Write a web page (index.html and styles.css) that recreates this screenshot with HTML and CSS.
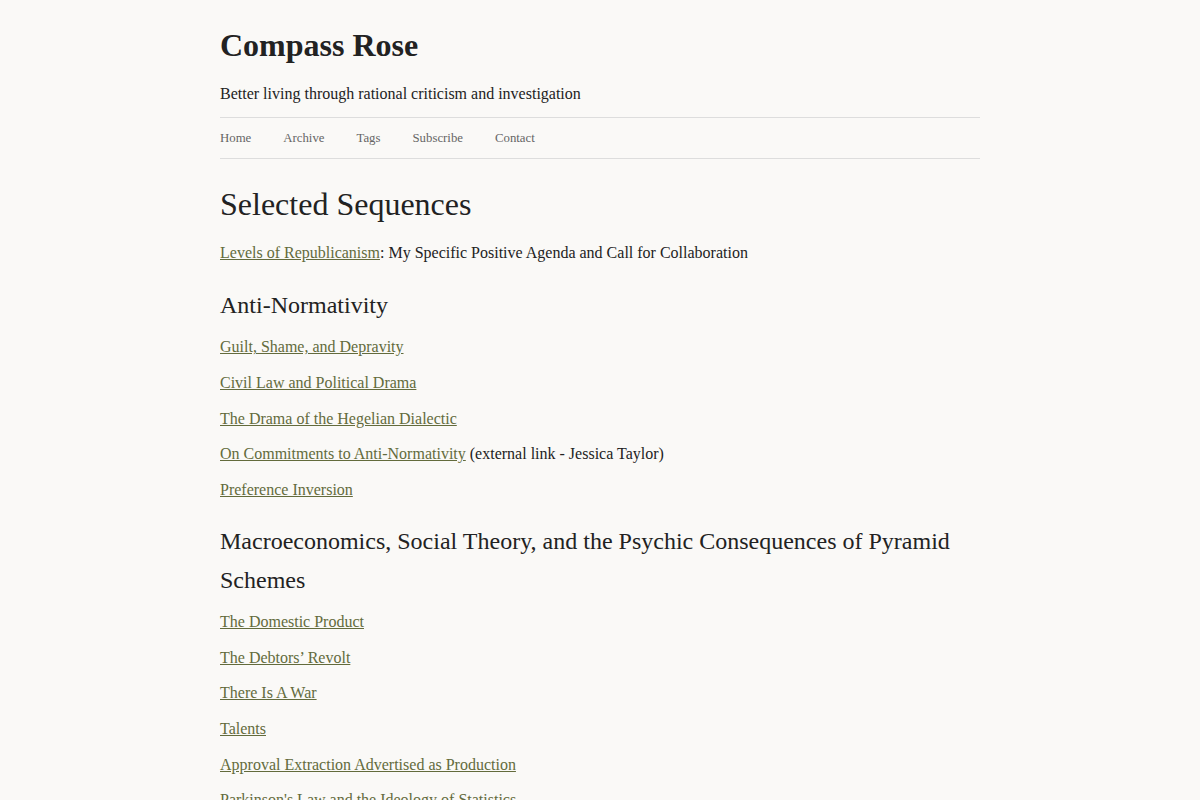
FILE: index.html
```html
<!DOCTYPE html>
<html>
<head>
    <link rel="stylesheet" href="styles.css">
</head>
<body>
  <div class="page">
    <header class="site-header">
      <h1 class="site-title">Compass Rose</h1>
      <p class="tagline">Better living through rational criticism and investigation</p>
    </header>

    <nav class="site-nav">
      <a href="#">Home</a>
      <a href="#">Archive</a>
      <a href="#">Tags</a>
      <a href="#">Subscribe</a>
      <a href="#">Contact</a>
    </nav>

    <main class="content">
      <h1>Selected Sequences</h1>
      <p><a href="#">Levels of Republicanism</a>: My Specific Positive Agenda and Call for Collaboration</p>

      <h2>Anti-Normativity</h2>
      <p><a href="#">Guilt, Shame, and Depravity</a></p>
      <p><a href="#">Civil Law and Political Drama</a></p>
      <p><a href="#">The Drama of the Hegelian Dialectic</a></p>
      <p><a href="#">On Commitments to Anti-Normativity</a> (external link - Jessica Taylor)</p>
      <p><a href="#">Preference Inversion</a></p>

      <h2>Macroeconomics, Social Theory, and the Psychic Consequences of Pyramid Schemes</h2>
      <p><a href="#">The Domestic Product</a></p>
      <p><a href="#">The Debtors’ Revolt</a></p>
      <p><a href="#">There Is A War</a></p>
      <p><a href="#">Talents</a></p>
      <p><a href="#">Approval Extraction Advertised as Production</a></p>
      <p><a href="#">Parkinson's Law and the Ideology of Statistics</a></p>
      <p><a href="#">Calvinism as a Theory of Recovered High-Trust Agency</a></p>
    </main>
  </div>
</body>
</html>
```

FILE: styles.css
```css
body {
    margin: 0;
    background-color: #faf9f7;
    color: #222;
    font-family: "Liberation Serif", "Times New Roman", serif;
    font-size: 16px;
    line-height: 1.6;
}

.page {
    max-width: 760px;
    margin: 0 auto;
}

.site-header {
    padding-top: 20px;
    padding-bottom: 10px;
    border-bottom: 1px solid #ddd;
}

.site-title {
    margin: 0;
    font-size: 32px;
    font-weight: bold;
}

.tagline {
    margin: 10px 0 0;
}

.site-nav {
    display: flex;
    gap: 32px;
    padding: 10px 0;
    border-bottom: 1px solid #ddd;
    font-size: 12.8px;
}

.site-nav a {
    color: #666;
    text-decoration: none;
}

.content h1 {
    margin: 20px 0 10px;
    font-size: 32px;
    font-weight: normal;
}

.content h2 {
    margin: 20px 0 10px;
    font-size: 24px;
    font-weight: normal;
}

.content p {
    margin: 10px 0;
}

.content a {
    color: #636b3c;
}
```
